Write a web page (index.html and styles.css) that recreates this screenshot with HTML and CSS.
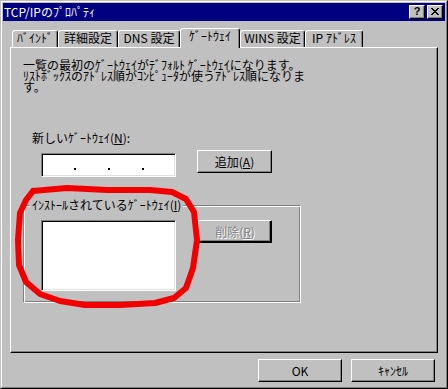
FILE: index.html
```html
<!DOCTYPE html>
<html lang="ja">
<head>
<meta charset="utf-8">
<title>TCP/IPのﾌﾟﾛﾊﾟﾃｨ</title>
<link rel="stylesheet" href="styles.css">
</head>
<body>
<div class="window">
  <div class="frame">
    <div class="titlebar">
      <span class="title">TCP/IPのﾌﾟﾛﾊﾟﾃｨ</span>
      <div class="tbtns">
        <span class="tbtn help">?</span>
        <span class="tbtn close"><svg width="8" height="7" viewBox="0 0 8 7" shape-rendering="crispEdges"><path d="M0 0h2v1H0zM6 0h2v1H6zM1 1h2v1H1zM5 1h2v1H5zM2 2h4v1H2zM3 3h2v1H3zM2 4h4v1H2zM1 5h2v1H1zM5 5h2v1H5zM0 6h2v1H0zM6 6h2v1H6z" fill="#000"/></svg></span>
      </div>
    </div>
    <div class="content">
      <div class="tabs">
        <div class="tab t1">ﾊﾞｲﾝﾄﾞ</div>
        <div class="tab t2">詳細設定</div>
        <div class="tab t3">DNS 設定</div>
        <div class="tab t4 active">ｹﾞｰﾄｳｪｲ</div>
        <div class="tab t5">WINS 設定</div>
        <div class="tab t6">IP ｱﾄﾞﾚｽ</div>
      </div>
      <div class="panel">
        <div class="desc">
          <span class="line">一覧の最初のｹﾞｰﾄｳｪｲがﾃﾞﾌｫﾙﾄ ｹﾞｰﾄｳｪｲになります。</span>
          <span class="line">ﾘｽﾄﾎﾞｯｸｽのｱﾄﾞﾚｽ順がｺﾝﾋﾟｭｰﾀが使うｱﾄﾞﾚｽ順になりま</span>
          <span class="line">す。</span>
        </div>
        <div class="newlabel">新しいｹﾞｰﾄｳｪｲ(<u>N</u>):</div>
        <div class="newrow">
          <div class="ipbox">
            <span class="seg"></span><span class="dot"></span>
            <span class="seg"></span><span class="dot"></span>
            <span class="seg"></span><span class="dot"></span>
          </div>
          <div class="btn addbtn">追加(<u>A</u>)</div>
        </div>
        <div class="group">
          <span class="legend">ｲﾝｽﾄｰﾙされているｹﾞｰﾄｳｪｲ(<u>I</u>)</span>
          <div class="listbox"></div>
          <div class="btn delbtn"><span class="disabled">削除(<u>R</u>)</span></div>
        </div>
      </div>
      <div class="actions">
        <div class="btn dlgbtn">OK</div>
        <div class="btn dlgbtn">ｷｬﾝｾﾙ</div>
      </div>
    </div>
  </div>
</div>
<svg class="annot" width="448" height="389" viewBox="0 0 448 389">
  <polyline points="33,191 67,188 107,190 150,190 172,192 186,199 194,212 197,240 193,268 186,288 174,298 155,303 120,305 85,305 60,301 40,294 26,282 19,265 18,240 20,213 26,200 33,191" fill="none" stroke="#f20000" stroke-width="6" stroke-linejoin="round" stroke-linecap="round"/>
</svg>
</body>
</html>
```

FILE: styles.css
```css
* { box-sizing: border-box; }

html, body {
  margin: 0;
  padding: 0;
}

body {
  position: relative;
  width: 448px;
  height: 389px;
  overflow: hidden;
  background: #c0c0c0;
  font-family: "Noto Sans CJK JP", "Noto Sans", sans-serif;
  font-size: 12px;
  line-height: 12px;
  color: #000;
}

u { text-decoration: underline; text-underline-offset: 1px; }

.window {
  width: 448px;
  height: 389px;
  border: 1px solid;
  border-color: #c0c0c0 #000 #000 #c0c0c0;
  background: #c0c0c0;
}

.frame {
  height: 100%;
  border: 1px solid;
  border-color: #fff #808080 #808080 #fff;
  padding: 1px;
  display: flex;
  flex-direction: column;
}

.titlebar {
  height: 18px;
  flex: none;
  background: #000080;
  color: #fff;
  display: flex;
  align-items: center;
  padding: 0 2px 0 1px;
}

.title { flex: 1; white-space: nowrap; }

.tbtns { display: flex; gap: 2px; }

.tbtn {
  width: 16px;
  height: 14px;
  border: 1px solid;
  border-color: #fff #000 #000 #fff;
  box-shadow: inset -1px -1px #808080;
  background: #c0c0c0;
  color: #000;
  display: flex;
  align-items: center;
  justify-content: center;
}

.help {
  font-family: "Liberation Sans", sans-serif;
  font-weight: bold;
  font-size: 11px;
  line-height: 11px;
  padding-bottom: 1px;
}

.close svg { display: block; margin-bottom: 1px; }

.content {
  flex: 1;
  padding: 7px 7px 0 7px;
  display: flex;
  flex-direction: column;
}

.tabs {
  height: 19px;
  flex: none;
  display: flex;
  align-items: flex-end;
  padding-left: 2px;
}

.tab {
  height: 17px;
  border: 1px solid #fff;
  border-right-color: #000;
  border-bottom: 0;
  border-radius: 3px 3px 0 0;
  box-shadow: inset -1px 0 #808080;
  padding-top: 1px;
  text-align: center;
  white-space: nowrap;
  background: #c0c0c0;
}

.t1 { width: 46px; }
.t2 { width: 60px; }
.t3 { width: 62px; }
.t4 { width: 60px; }
.t5 { width: 65px; }
.t6 { width: 58px; }

.tab.active {
  height: 20px;
  margin-bottom: -1px;
  position: relative;
  z-index: 1;
}

.panel {
  height: 306px;
  flex: none;
  border: 1px solid;
  border-color: #fff #000 #000 #fff;
  box-shadow: inset -1px -1px #808080;
}

.desc {
  margin: 11px 0 0 12px;
  line-height: 11px;
}

.desc .line { display: block; white-space: nowrap; }

.newlabel {
  margin: 40px 0 0 21px;
}

.newrow {
  margin: 6px 0 0 30px;
  display: flex;
  align-items: flex-start;
}

.ipbox {
  width: 135px;
  height: 24px;
  margin-top: 3px;
  border: 1px solid;
  border-color: #808080 #fff #fff #808080;
  box-shadow: inset 1px 1px #000, inset -1px -1px #dfdfdf;
  background: #fff;
  display: flex;
  align-items: flex-start;
}

.seg { width: 32px; flex: none; }
.dot { width: 2px; height: 2px; margin-top: 14px; background: #000; flex: none; }

.btn {
  border: 1px solid;
  border-color: #fff #000 #000 #fff;
  box-shadow: inset -1px -1px #808080;
  background: #c0c0c0;
  display: flex;
  align-items: center;
  justify-content: center;
  white-space: nowrap;
}

.addbtn {
  width: 75px;
  height: 23px;
  margin-left: 21px;
}

.group {
  position: relative;
  width: 278px;
  height: 98px;
  margin: 28px 0 0 12px;
  border: 1px solid;
  border-color: #808080 #fff #fff #808080;
  box-shadow: inset 1px 1px #fff, inset -1px -1px #808080;
  padding: 14px 0 0 17px;
  display: flex;
  align-items: flex-start;
}

.legend {
  position: absolute;
  top: -7px;
  left: 6px;
  padding: 0 2px;
  background: #c0c0c0;
  white-space: nowrap;
}

.listbox {
  width: 135px;
  height: 71px;
  border: 1px solid;
  border-color: #808080 #fff #fff #808080;
  box-shadow: inset 1px 1px #000, inset -1px -1px #dfdfdf;
  background: #fff;
}

.delbtn {
  width: 74px;
  height: 23px;
  margin-left: 22px;
  box-shadow: inset -1px -1px #000, inset -2px -2px #808080;
}

.disabled {
  color: #808080;
  text-shadow: 1px 1px 0 #fff;
}

.actions {
  margin-top: 6px;
  padding-right: 3px;
  display: flex;
  justify-content: flex-end;
  gap: 9px;
}

.dlgbtn {
  width: 84px;
  height: 23px;
}

.annot {
  position: absolute;
  top: 0;
  left: 0;
  pointer-events: none;
  z-index: 5;
}
```
